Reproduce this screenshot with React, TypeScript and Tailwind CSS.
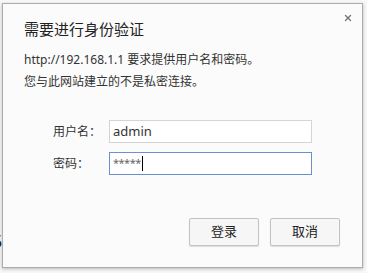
import { X } from 'lucide-react';

const font = { fontFamily: '"Noto Sans", "Noto Sans CJK SC", sans-serif' };

export default function App() {
  return (
    <div className="relative h-[273px] w-[367px] overflow-hidden bg-[#f7f7f7]" style={font}>
      {/* page content peeking out behind the dialog */}
      <div className="absolute left-[-8px] top-[230px] text-[18px] leading-[22px] text-[#222]">5</div>

      <div className="absolute left-[2px] top-[3px] flex h-[265px] w-[361px] flex-col border border-[#acacac] bg-[#fbfbfb] shadow-[0_1px_3px_rgba(0,0,0,0.25)]">
        <button type="button" className="absolute right-[6px] top-[6px] flex h-4 w-4 items-center justify-center text-[#707070]">
          <X className="h-[10px] w-[10px]" strokeWidth={3} />
        </button>

        <div className="px-[21px] pt-[15px]">
          <div className="text-[15px] leading-[20px] text-[#222]">需要进行身份验证</div>
          <div className="mt-[11px] text-[12px] leading-[20px] text-[#333]">http://192.168.1.1 要求提供用户名和密码。</div>
          <div className="mt-[2px] text-[12px] leading-[20px] text-[#333]">您与此网站建立的不是私密连接。</div>
        </div>

        <div className="mt-[28px] flex flex-col gap-[9px] pl-[50px]">
          <div className="flex items-center">
            <span className="w-[56px] text-[12px] text-[#333]">用户名：</span>
            <div className="flex h-[23px] w-[203px] items-center border border-[#d4d4d4] bg-white px-[3px] text-[13px] text-[#333]">admin</div>
          </div>
          <div className="flex items-center">
            <span className="w-[56px] text-[12px] text-[#333]">密码：</span>
            <div className="flex h-[23px] w-[203px] items-center border border-[#6b8fd2] bg-white px-[3px] text-[11px] text-[#666]">
              <span className="tracking-[-0.5px]">*****</span>
              <span className="ml-[1px] h-[15px] w-px bg-black" />
            </div>
          </div>
        </div>

        <div className="mt-[43px] flex justify-end gap-[11px] pr-[22px]">
          <button type="button" className="h-[28px] w-[70px] rounded-[2px] border border-[#c2c2c2] bg-[#f6f6f6] text-[13px] text-[#222] shadow-[0_1px_1px_rgba(0,0,0,0.12)]">登录</button>
          <button type="button" className="h-[28px] w-[70px] rounded-[2px] border border-[#c2c2c2] bg-[#f6f6f6] text-[13px] text-[#222] shadow-[0_1px_1px_rgba(0,0,0,0.12)]">取消</button>
        </div>
      </div>
    </div>
  );
}
